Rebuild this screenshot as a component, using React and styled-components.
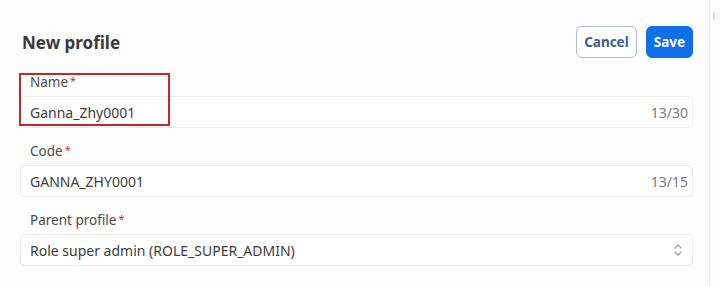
import React from "react";
import styled, { createGlobalStyle } from "styled-components";

const Global = createGlobalStyle`
  html, body {
    margin: 0;
    padding: 0;
    background: #fdfdfd;
  }
  body {
    font-family: "Noto Sans", "Open Sans", sans-serif;
    color: #3a3a3a;
  }
`;

const Page = styled.div`
  width: 720px;
  height: 286px;
  box-sizing: border-box;
  display: flex;
  overflow: hidden;
`;

const Panel = styled.div`
  flex: 1;
  padding: 26px 16px 0 20px;
  display: flex;
  flex-direction: column;
`;

const Edge = styled.div`
  width: 10px;
  border-left: 1px solid #ececec;
  position: relative;
  &::before {
    content: "";
    position: absolute;
    left: 3px;
    top: 12px;
    width: 2px;
    height: 8px;
    background: #dcdcdc;
  }
`;

const Header = styled.div`
  display: flex;
  align-items: center;
  justify-content: space-between;
  height: 32px;
  margin-bottom: 16px;
`;

const Title = styled.h1`
  margin: 0 0 0 2px;
  font-size: 17px;
  font-weight: 700;
  color: #3b3b3b;
`;

const Actions = styled.div`
  display: flex;
  gap: 9px;
`;

const Button = styled.button`
  height: 32px;
  padding: 0 7px;
  border-radius: 6px;
  font-family: inherit;
  font-size: 13.5px;
  font-weight: 700;
  cursor: pointer;
  border: 1.5px solid ${(p) => (p.$primary ? "#0f6fe8" : "#a8bcd4")};
  background: ${(p) => (p.$primary ? "#0f6fe8" : "#ffffff")};
  color: ${(p) => (p.$primary ? "#ffffff" : "#3d5f8c")};
`;

const Field = styled.div`
  position: relative;
  display: flex;
  flex-direction: column;
  margin-bottom: 15px;
`;

const Label = styled.label`
  font-size: 13.5px;
  color: #4a4a4a;
  padding-left: 10px;
  height: 22px;
  line-height: 17px;
  span {
    color: #d2313a;
    margin-left: 2px;
    font-size: 11px;
    vertical-align: top;
    line-height: 14px;
  }
`;

const InputBox = styled.div`
  height: 32px;
  box-sizing: border-box;
  border: 1px solid #ececec;
  border-radius: 4px;
  background: #ffffff;
  display: flex;
  align-items: center;
  justify-content: space-between;
  padding: 0 4px 0 9px;
  font-size: 14px;
  color: #3c3c3c;
`;

const Counter = styled.span`
  font-size: 14px;
  color: #7a7a7a;
`;

const Highlight = styled.div`
  position: absolute;
  left: -1px;
  top: -1px;
  width: 151px;
  height: 53px;
  border: 2px solid #c9252d;
  box-sizing: border-box;
  pointer-events: none;
`;

const Chevrons = () => (
  <svg width="12" height="14" viewBox="0 0 12 14" fill="none" stroke="#9a9a9a" strokeWidth="1.3" strokeLinecap="round" strokeLinejoin="round" style={{ marginRight: 4 }}>
    <path d="M3 5l3-3 3 3" />
    <path d="M3 9l3 3 3-3" />
  </svg>
);

export default function App() {
  return (
    <>
      <Global />
      <Page>
        <Panel>
          <Header>
            <Title>New profile</Title>
            <Actions>
              <Button>Cancel</Button>
              <Button $primary>Save</Button>
            </Actions>
          </Header>

          <Field>
            <Label>Name<span>*</span></Label>
            <InputBox>
              Ganna_Zhy0001
              <Counter>13/30</Counter>
            </InputBox>
            <Highlight />
          </Field>

          <Field>
            <Label>Code<span>*</span></Label>
            <InputBox>
              GANNA_ZHY0001
              <Counter>13/15</Counter>
            </InputBox>
          </Field>

          <Field>
            <Label>Parent profile<span>*</span></Label>
            <InputBox>
              Role super admin (ROLE_SUPER_ADMIN)
              <Chevrons />
            </InputBox>
          </Field>
        </Panel>
        <Edge />
      </Page>
    </>
  );
}
